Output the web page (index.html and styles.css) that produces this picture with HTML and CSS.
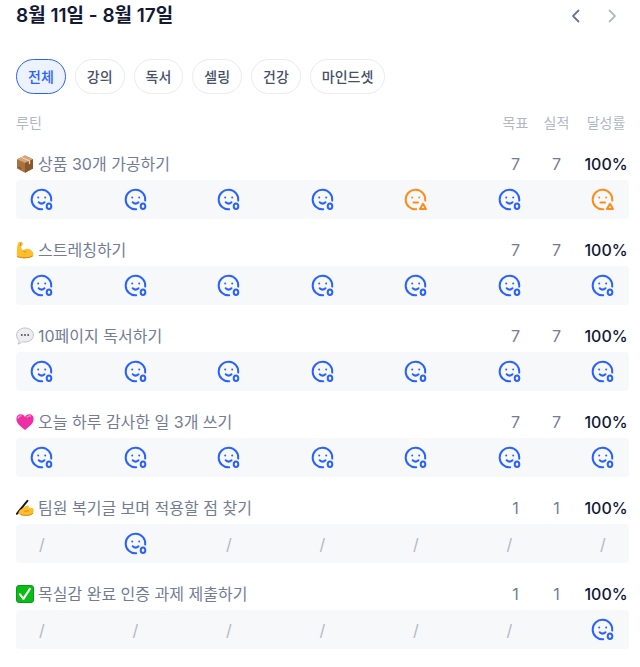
FILE: index.html
```html
<!DOCTYPE html>
<html lang="ko">
<head>
    <meta charset="UTF-8">
    <meta name="viewport" content="width=device-width, initial-scale=1.0">
    <title>주간 루틴</title>
    <link rel="stylesheet" href="styles.css">
</head>
<body>
    <svg class="sprite" aria-hidden="true">
        <symbol id="good" viewBox="0 0 24 24">
            <g fill="none" stroke="currentColor" stroke-width="2" stroke-linecap="round">
                <path d="M21.2 12.6A9.8 9.8 0 1 0 12.2 21.3"/>
                <path d="M8.7 14.2Q11.6 17 14.5 14.2"/>
                <ellipse cx="19" cy="18.3" rx="2.3" ry="2.8"/>
            </g>
            <circle cx="8.2" cy="9.6" r="1" fill="currentColor"/>
            <circle cx="15.2" cy="9.6" r="1" fill="currentColor"/>
        </symbol>
        <symbol id="soso" viewBox="0 0 24 24">
            <g fill="none" stroke="currentColor" stroke-width="2" stroke-linecap="round" stroke-linejoin="round">
                <path d="M21.2 12.6A9.8 9.8 0 1 0 12.2 21.3"/>
                <path d="M9.4 14.5H14"/>
                <path d="M19 15.8L22 21H16Z"/>
            </g>
            <circle cx="8.2" cy="9.6" r="1" fill="currentColor"/>
            <circle cx="15.2" cy="9.6" r="1" fill="currentColor"/>
        </symbol>
    </svg>

    <div class="container">
        <header class="week">
            <h1>8월 11일 - 8월 17일</h1>
            <div class="week-nav">
                <button type="button" aria-label="이전 주">
                    <svg viewBox="0 0 24 24"><path d="M14.5 6.5L9 12L14.5 17.5"/></svg>
                </button>
                <button type="button" class="next" aria-label="다음 주">
                    <svg viewBox="0 0 24 24"><path d="M9.5 6.5L15 12L9.5 17.5"/></svg>
                </button>
            </div>
        </header>

        <div class="filters">
            <button type="button" class="chip active">전체</button>
            <button type="button" class="chip">강의</button>
            <button type="button" class="chip">독서</button>
            <button type="button" class="chip">셀링</button>
            <button type="button" class="chip">건강</button>
            <button type="button" class="chip">마인드셋</button>
        </div>

        <table class="routines">
            <thead>
                <tr>
                    <th class="name">루틴</th>
                    <th class="num">목표</th>
                    <th class="num">실적</th>
                    <th class="rate">달성률</th>
                </tr>
            </thead>
            <tbody>
                <tr>
                    <th class="name"><div class="title">
                        <svg class="emoji" viewBox="0 0 18 18">
                            <path d="M9 .6L17 4.2V13.6L9 17.8L1 13.6V4.2Z" fill="#a9713f"/>
                            <path d="M9 .6L17 4.2L9 8L1 4.2Z" fill="#d3a577"/>
                            <path d="M9 8L17 4.2V13.6L9 17.8Z" fill="#8a562b"/>
                            <path d="M4.6 2.6L12.8 6.2V9.4L14.2 8.7V5.5L6 2Z" fill="#ead3b4"/>
                            <path d="M2.4 12.2L5 13.5" stroke="#6d421f" stroke-width="1"/>
                        </svg>
                        상품 30개 가공하기
                    </div></th>
                    <td class="num">7</td>
                    <td class="num">7</td>
                    <td class="rate">100%</td>
                </tr>
                <tr>
                    <td class="days" colspan="4"><div class="strip">
                        <svg class="good"><use href="#good"/></svg>
                        <svg class="good"><use href="#good"/></svg>
                        <svg class="good"><use href="#good"/></svg>
                        <svg class="good"><use href="#good"/></svg>
                        <svg class="soso"><use href="#soso"/></svg>
                        <svg class="good"><use href="#good"/></svg>
                        <svg class="soso"><use href="#soso"/></svg>
                    </div></td>
                </tr>
            </tbody>
            <tbody>
                <tr>
                    <th class="name"><div class="title">
                        <svg class="emoji" viewBox="0 0 18 18">
                            <path d="M2.4 1.4C3.6 .5 5.9 .7 6.5 1.8C7.2 3.2 6.4 4.8 4.8 5C5 7 6 8.6 7.3 9.8C9 7.6 12.8 7.2 15 9C17.5 10.8 18 13.4 16.6 15.2C14.8 17.4 7 17.8 2.2 16.2C.7 15.6 .6 13.6 .8 11.5C1 8 1 4 2.4 1.4Z" fill="#fdbf2d"/>
                            <path d="M7.3 9.8C8 10.6 8.8 11 9.8 11M1.4 15.6C5 17.2 12.8 17.4 16.4 15.2M4.4 2.6L4.8 5" fill="none" stroke="#dd8217" stroke-width="1" stroke-linecap="round"/>
                        </svg>
                        스트레칭하기
                    </div></th>
                    <td class="num">7</td>
                    <td class="num">7</td>
                    <td class="rate">100%</td>
                </tr>
                <tr>
                    <td class="days" colspan="4"><div class="strip">
                        <svg class="good"><use href="#good"/></svg>
                        <svg class="good"><use href="#good"/></svg>
                        <svg class="good"><use href="#good"/></svg>
                        <svg class="good"><use href="#good"/></svg>
                        <svg class="good"><use href="#good"/></svg>
                        <svg class="good"><use href="#good"/></svg>
                        <svg class="good"><use href="#good"/></svg>
                    </div></td>
                </tr>
            </tbody>
            <tbody>
                <tr>
                    <th class="name"><div class="title">
                        <svg class="emoji" viewBox="0 0 18 18">
                            <path d="M9 1C13.8 1 17.4 3.9 17.4 8S13.8 15 9 15C8 15 7 14.9 6.2 14.6C5 16 3.4 17 1.8 17C2.8 16 3.2 14.8 3 13.4C1.4 12.2 .6 10.2 .6 8C.6 3.9 4.2 1 9 1Z" fill="#eeeef0" stroke="#c3c4c8" stroke-width="1"/>
                            <circle cx="5.8" cy="8" r="1" fill="#55565b"/>
                            <circle cx="9" cy="8" r="1" fill="#55565b"/>
                            <circle cx="12.2" cy="8" r="1" fill="#55565b"/>
                        </svg>
                        10페이지 독서하기
                    </div></th>
                    <td class="num">7</td>
                    <td class="num">7</td>
                    <td class="rate">100%</td>
                </tr>
                <tr>
                    <td class="days" colspan="4"><div class="strip">
                        <svg class="good"><use href="#good"/></svg>
                        <svg class="good"><use href="#good"/></svg>
                        <svg class="good"><use href="#good"/></svg>
                        <svg class="good"><use href="#good"/></svg>
                        <svg class="good"><use href="#good"/></svg>
                        <svg class="good"><use href="#good"/></svg>
                        <svg class="good"><use href="#good"/></svg>
                    </div></td>
                </tr>
            </tbody>
            <tbody>
                <tr>
                    <th class="name"><div class="title">
                        <svg class="emoji" viewBox="0 0 18 18">
                            <path d="M9 17C5 13.8 .4 10.6 .4 6C.4 3.2 2.2 1.2 4.7 1.2C6.6 1.2 8.2 2.2 9 4C9.8 2.2 11.4 1.2 13.3 1.2C15.8 1.2 17.6 3.2 17.6 6C17.6 10.6 13 13.8 9 17Z" fill="#ee2fa4"/>
                            <path d="M2.2 5.2C2.4 3.6 3.6 2.8 5 2.9M11.2 4.2C12 3 13.2 2.7 14.4 3" fill="none" stroke="#ff8bd0" stroke-width="1.4" stroke-linecap="round"/>
                        </svg>
                        오늘 하루 감사한 일 3개 쓰기
                    </div></th>
                    <td class="num">7</td>
                    <td class="num">7</td>
                    <td class="rate">100%</td>
                </tr>
                <tr>
                    <td class="days" colspan="4"><div class="strip">
                        <svg class="good"><use href="#good"/></svg>
                        <svg class="good"><use href="#good"/></svg>
                        <svg class="good"><use href="#good"/></svg>
                        <svg class="good"><use href="#good"/></svg>
                        <svg class="good"><use href="#good"/></svg>
                        <svg class="good"><use href="#good"/></svg>
                        <svg class="good"><use href="#good"/></svg>
                    </div></td>
                </tr>
            </tbody>
            <tbody>
                <tr>
                    <th class="name"><div class="title">
                        <svg class="emoji" viewBox="0 0 18 18">
                            <path d="M1.6 12.4C3 9.6 5.4 8 8 7.8L11.6 6.4C13.2 6.2 13.6 8 12.2 8.4L16.6 9C18 9.8 18 13 17 14.6C15.4 16.8 8 17.2 4.6 16C2.8 15.2 1 14 1.6 12.4Z" fill="#fdbf2d"/>
                            <path d="M8.4 12H12.4M5 15.6C8.8 17 14.6 16.8 16.8 14.4" fill="none" stroke="#dd8217" stroke-width="1" stroke-linecap="round"/>
                            <path d="M.8 14.8L11.4 1.8" stroke="#16161c" stroke-width="1.9" stroke-linecap="round"/>
                            <path d="M3.6 13.6C4.6 11.4 6.6 10.4 8.6 10.6" fill="none" stroke="#fdbf2d" stroke-width="2.2" stroke-linecap="round"/>
                        </svg>
                        팀원 복기글 보며 적용할 점 찾기
                    </div></th>
                    <td class="num">1</td>
                    <td class="num">1</td>
                    <td class="rate">100%</td>
                </tr>
                <tr>
                    <td class="days" colspan="4"><div class="strip">
                        <span>/</span>
                        <svg class="good"><use href="#good"/></svg>
                        <span>/</span>
                        <span>/</span>
                        <span>/</span>
                        <span>/</span>
                        <span>/</span>
                    </div></td>
                </tr>
            </tbody>
            <tbody>
                <tr>
                    <th class="name"><div class="title">
                        <svg class="emoji" viewBox="0 0 18 18">
                            <rect x=".5" y=".5" width="17" height="17" rx="2.5" fill="#08bd14" stroke="#0a9a1a"/>
                            <path d="M4 9.4L7.4 13.8L13.8 4" fill="none" stroke="#fff" stroke-width="2.2" stroke-linecap="round" stroke-linejoin="round"/>
                        </svg>
                        목실감 완료 인증 과제 제출하기
                    </div></th>
                    <td class="num">1</td>
                    <td class="num">1</td>
                    <td class="rate">100%</td>
                </tr>
                <tr>
                    <td class="days" colspan="4"><div class="strip">
                        <span>/</span>
                        <span>/</span>
                        <span>/</span>
                        <span>/</span>
                        <span>/</span>
                        <span>/</span>
                        <svg class="good"><use href="#good"/></svg>
                    </div></td>
                </tr>
            </tbody>
        </table>
    </div>
</body>
</html>
```

FILE: styles.css
```css
* {
    box-sizing: border-box;
}
body {
    margin: 0;
    background: #fff;
    font-family: Inter, "Noto Sans CJK KR", sans-serif;
    color: #111936;
}
.sprite {
    display: none;
}
.container {
    padding: 4px 11px 16px 16px;
}
.week {
    display: flex;
    align-items: center;
    justify-content: space-between;
    height: 24px;
}
.week h1 {
    margin: 0;
    font-size: 19px;
    line-height: 24px;
    font-weight: 600;
}
.week-nav {
    display: flex;
    gap: 12px;
    padding-right: 5px;
}
.week-nav button {
    width: 24px;
    height: 24px;
    padding: 0;
    border: none;
    background: none;
    color: #6b7590;
    cursor: pointer;
}
.week-nav .next {
    color: #b5bac8;
}
.week-nav svg {
    display: block;
    fill: none;
    stroke: currentColor;
    stroke-width: 1.8;
    stroke-linecap: round;
    stroke-linejoin: round;
}
.filters {
    display: flex;
    flex-wrap: wrap;
    gap: 9px;
    margin-top: 31px;
}
.chip {
    height: 35px;
    padding: 0 11px;
    border: 1px solid #e9ebf0;
    border-radius: 18px;
    background: #fff;
    color: #465069;
    font-family: inherit;
    font-size: 14px;
    line-height: 20px;
    font-weight: 500;
    cursor: pointer;
}
.chip.active {
    border-color: #2962ff;
    background: #edf2ff;
    color: #2962ff;
}
.routines {
    width: 100%;
    margin-top: 18px;
    border-collapse: collapse;
    table-layout: fixed;
}
.routines th, .routines td {
    padding: 0;
    font-weight: 400;
    text-align: center;
}
.routines thead th {
    font-size: 14px;
    line-height: 21px;
    color: #b2b7c4;
}
.routines th.name {
    text-align: left;
}
.routines .num {
    width: 41px;
}
.routines .rate {
    width: 52px;
    padding-left: 6px;
    white-space: nowrap;
}
.routines tbody th, .routines tbody td {
    height: 47px;
    padding-top: 14px;
    font-size: 16px;
    line-height: 24px;
    color: #737c94;
}
.routines tbody .rate {
    color: #111936;
    font-weight: 500;
}
.title {
    display: flex;
    align-items: center;
    gap: 4px;
}
.emoji {
    width: 18px;
    height: 18px;
    flex: none;
}
.routines tbody .days {
    height: 39px;
    padding: 0;
}
.strip {
    display: flex;
    align-items: center;
    justify-content: space-between;
    height: 39px;
    padding: 0 14px;
    border-radius: 4px;
    background: #f7f8fa;
}
.strip svg, .strip span {
    width: 24px;
    height: 24px;
}
.strip span {
    color: #b2b7c4;
}
.strip .good {
    color: #2962ff;
}
.strip .soso {
    color: #ff8c1a;
}
```
